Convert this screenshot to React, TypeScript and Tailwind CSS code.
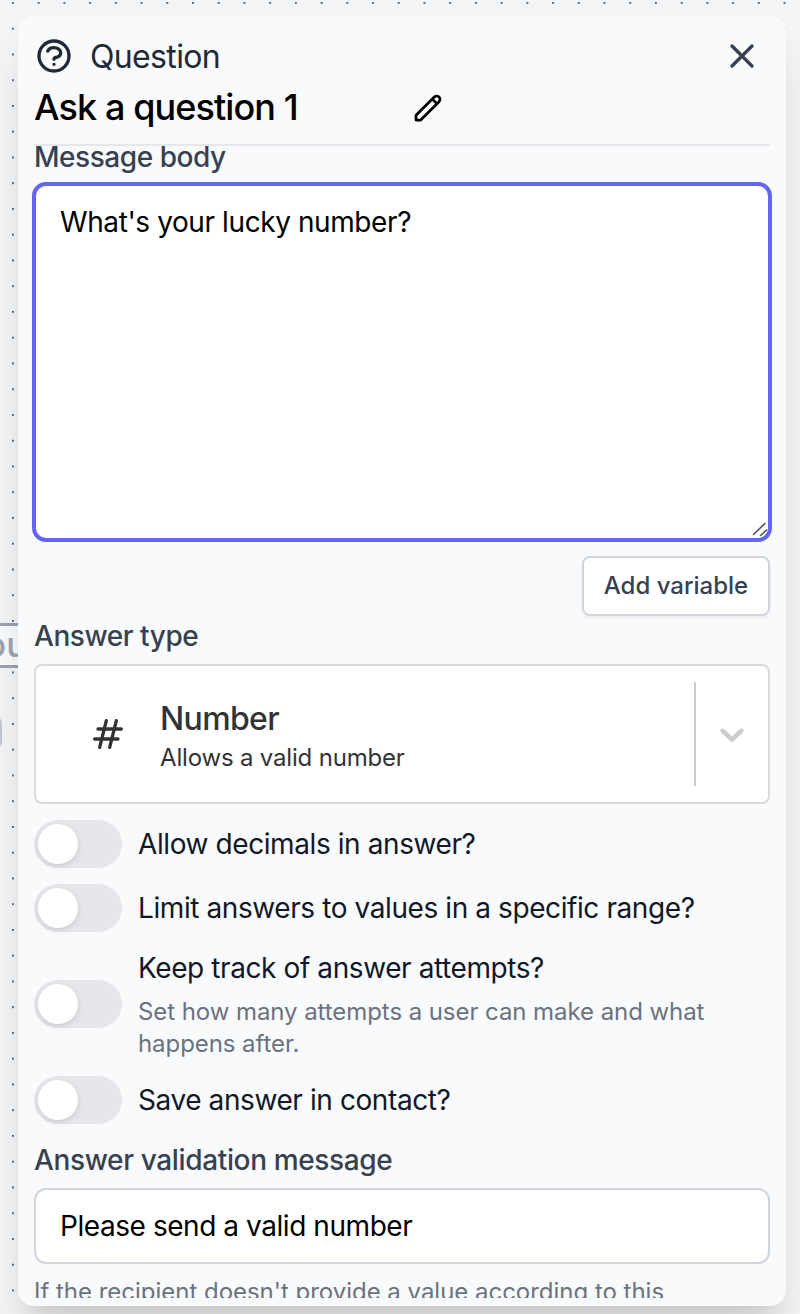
import { ReactNode, useState } from "react";
import {
  HiOutlineHashtag,
  HiOutlinePencil,
  HiOutlineQuestionMarkCircle,
  HiOutlineX,
} from "react-icons/hi";

interface ToggleFieldProps {
  label: string;
  className: string;
  children?: ReactNode;
}

function ToggleField({ label, className, children }: ToggleFieldProps) {
  const [checked, setChecked] = useState(false);

  return (
    <div className={`flex items-center gap-4 ${className}`}>
      <button
        type="button"
        role="switch"
        aria-checked={checked}
        aria-label={label}
        onClick={() => setChecked(!checked)}
        className={`flex h-12 w-22 shrink-0 items-center rounded-full px-1 ${
          checked ? "justify-end bg-indigo-600" : "bg-[#e5e7eb]"
        }`}
      >
        <span className="size-10 rounded-full bg-white shadow-[0_2px_6px_rgba(0,0,0,0.12)]" />
      </button>
      <div className="whitespace-nowrap">
        <p className="text-[28px] leading-10 tracking-[-0.41px] text-[#111827]">
          {label}
        </p>
        {children}
      </div>
    </div>
  );
}

function CanvasBackground() {
  return (
    <div className="absolute inset-0">
      <svg className="absolute inset-0 size-full">
        <defs>
          <pattern
            id="dots"
            x="12"
            y="2"
            width="25.72"
            height="25.75"
            patternUnits="userSpaceOnUse"
          >
            <rect width="1.8" height="1.8" fill="#4b5563" />
          </pattern>
        </defs>
        <rect width="100%" height="100%" fill="url(#dots)" />
      </svg>
      <div className="absolute top-[623px] left-0 flex h-[45px] w-10 items-center border-y-[3px] border-[#9ca3af] bg-[#f9fafb]">
        <span className="-mt-0.5 -ml-[15px] text-[35px] leading-none font-medium text-[#9ca3af]">
          ou
        </span>
      </div>
      <div className="absolute top-[717px] -left-4 h-[31px] w-[18px] rounded-md border-2 border-[#c3c7d0] bg-[#e5e7eb]" />
    </div>
  );
}

export default function App() {
  const [message, setMessage] = useState("What's your lucky number?");
  const [validation, setValidation] = useState("Please send a valid number");

  return (
    <div className="relative h-[1314px] w-[800px] overflow-hidden bg-[#f3f4f6] pt-4 pl-[18px] font-['Inter',sans-serif]">
      <CanvasBackground />

      <div className="relative h-[1290px] w-[768px] rounded-2xl bg-[#f9fafb] px-4 pt-5 pb-2 shadow-[0_40px_50px_-10px_rgba(0,0,0,0.1),0_16px_20px_-12px_rgba(0,0,0,0.1),0_16px_30px_0_rgba(0,0,0,0.025)]">
        <header className="h-[110px] border-b-2 border-[#e5e7eb]">
          <div className="flex h-10 items-center">
            <HiOutlineQuestionMarkCircle className="size-10 text-[#1f2937]" />
            <h1 className="mt-0.5 ml-4 text-[32px] leading-10 tracking-[-0.65px] text-[#1f2937]">
              Question
            </h1>
            <button type="button" className="mr-2 ml-auto">
              <HiOutlineX className="size-10 text-[#374151]" />
            </button>
          </div>
          <div className="flex h-16 items-center">
            <h2 className="-mt-0.5 w-[378px] text-[36px] font-medium tracking-[-0.9px] text-black">
              Ask a question 1
            </h2>
            <HiOutlinePencil className="size-8 text-black" />
          </div>
        </header>

        <div className="-mx-0.5 h-[1152px] overflow-hidden px-0.5">
          <label className="block h-9 text-[28px] leading-[22px] font-medium tracking-[-0.45px] text-[#374151]">
            Message body
          </label>
          <div className="relative -mx-0.5 h-[360px]">
            <textarea
              value={message}
              onChange={(event) => setMessage(event.target.value)}
              className="block size-full resize-none rounded-[14px] border-4 border-[#6366f1] bg-white px-6 py-4 text-[28px] leading-10 tracking-[-0.41px] text-black outline-none"
            />
            <svg
              viewBox="0 0 16 16"
              className="absolute right-1 bottom-1 size-4"
              stroke="#555"
              strokeWidth="1.6"
              strokeLinecap="round"
            >
              <path d="M1.5 12.5L13 1.5M8.5 13.5L14.5 8" />
            </svg>
          </div>

          <div className="flex justify-end pt-3.5">
            <button
              type="button"
              className="h-[60px] w-[188px] rounded-lg border-2 border-[#d1d5db] bg-white text-[24px] font-medium whitespace-nowrap text-[#374151] shadow-[0_2px_4px_rgba(0,0,0,0.05)]"
            >
              Add variable
            </button>
          </div>

          <label className="block h-12 text-[28px] leading-10 font-medium tracking-[-0.45px] text-[#374151]">
            Answer type
          </label>
          <div className="flex h-[140px] items-center rounded-lg border-2 border-[#d9dadc] bg-white">
            <HiOutlineHashtag className="ml-[52px] size-10 text-[#333333]" />
            <div className="mt-[7px] ml-8 text-[#333333]">
              <p className="text-[32px] leading-10 font-medium tracking-[-0.65px]">
                Number
              </p>
              <p className="text-[24px] leading-[38px] tracking-[-0.18px]">
                Allows a valid number
              </p>
            </div>
            <div className="ml-auto h-[104px] w-0.5 bg-[#cccccc]" />
            <div className="flex w-[72px] justify-center">
              <svg viewBox="0 0 20 20" className="size-10 fill-[#cccccc]">
                <path d="M4.516 7.548c0.436-0.446 1.043-0.481 1.576 0l3.908 3.747 3.908-3.747c0.533-0.481 1.141-0.446 1.574 0 0.436 0.445 0.408 1.197 0 1.615-0.406 0.418-4.695 4.502-4.695 4.502-0.217 0.223-0.502 0.335-0.787 0.335s-0.57-0.112-0.789-0.335c0 0-4.287-4.084-4.695-4.502s-0.436-1.17 0-1.615z" />
              </svg>
            </div>
          </div>

          <ToggleField
            label="Allow decimals in answer?"
            className="mt-4 h-12"
          />
          <ToggleField
            label="Limit answers to values in a specific range?"
            className="mt-4 h-12"
          />
          <ToggleField
            label="Keep track of answer attempts?"
            className="mt-4 h-28"
          >
            <p className="mt-2 text-[24px] leading-8 tracking-[-0.07px] text-[#6b7280]">
              Set how many attempts a user can make and what
              <br />
              happens after.
            </p>
          </ToggleField>
          <ToggleField
            label="Save answer in contact?"
            className="mt-4 h-12"
          />

          <label className="mt-4 block h-12 text-[28px] leading-10 font-medium tracking-[-0.36px] text-[#374151]">
            Answer validation message
          </label>
          <input
            type="text"
            value={validation}
            onChange={(event) => setValidation(event.target.value)}
            className="block h-[76px] w-full rounded-xl border-2 border-[#d1d5db] bg-white px-6 text-[28px] tracking-[-0.44px] text-black outline-none"
          />
          <p className="mt-3 text-[24px] leading-8 tracking-[-0.02px] whitespace-nowrap text-[#6b7280]">
            If the recipient doesn't provide a value according to this
          </p>
        </div>
      </div>
    </div>
  );
}
